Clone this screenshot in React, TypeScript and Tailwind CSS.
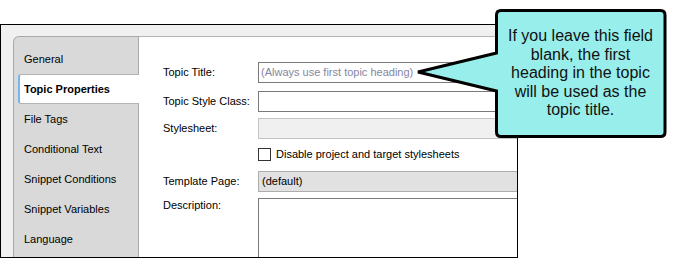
import React from "react";

const tabs = [
  "General",
  "Topic Properties",
  "File Tags",
  "Conditional Text",
  "Snippet Conditions",
  "Snippet Variables",
  "Language",
];

export default function App() {
  return (
    <div className="relative w-[676px] h-[258px] overflow-hidden bg-white font-['Liberation_Sans',Arial,sans-serif] text-black">
      <div className="pt-[24px]">
        <div className="flex w-[518px] h-[234px] overflow-hidden border border-black bg-[#f0f0f0] pt-[11px] pl-[12px]">
          {/* tab strip */}
          <div className="w-[126px] h-[260px] shrink-0 rounded-tl-[6px] border-l border-t border-r border-[#a9a9a9] bg-[#d9d9d9] pt-[7px] text-[11px]">
            {tabs.map((t) =>
              t === "Topic Properties" ? (
                <div
                  key={t}
                  className="relative z-10 ml-[4px] -mr-[1px] flex h-[30px] items-center rounded-l-[3px] border-y border-l-2 border-y-[#b4b4b4] border-l-[#79b5ea] bg-white pl-[4px] font-bold"
                >
                  {t}
                </div>
              ) : (
                <div key={t} className="flex h-[30px] items-center pl-[10px]">
                  {t}
                </div>
              )
            )}
          </div>
          {/* content */}
          <div className="min-w-0 flex-1 h-[260px] overflow-hidden border-t border-[#b4b4b4] bg-white pl-[24px] text-[11px]">
            <div className="mt-[25px] flex h-[21px] items-center">
              <div className="w-[95px] shrink-0">Topic Title:</div>
              <div className="flex h-[21px] w-[300px] shrink-0 items-center border border-[#7a7a7a] bg-white px-[2px] text-[#8585a0]">
                (Always use first topic heading)
              </div>
            </div>
            <div className="mt-[8px] flex h-[21px] items-center">
              <div className="w-[95px] shrink-0">Topic Style Class:</div>
              <div className="h-[21px] w-[300px] shrink-0 border border-[#7a7a7a] bg-white" />
            </div>
            <div className="mt-[6px] flex h-[21px] items-center">
              <div className="w-[95px] shrink-0">Stylesheet:</div>
              <div className="h-[21px] w-[300px] shrink-0 border border-[#c4c4c4] bg-[#f0f0f0]" />
            </div>
            <div className="mt-[9px] flex h-[13px] items-center">
              <div className="w-[95px] shrink-0" />
              <div className="h-[13px] w-[13px] shrink-0 border border-[#333333] bg-white" />
              <div className="ml-[5px] whitespace-nowrap">Disable project and target stylesheets</div>
            </div>
            <div className="mt-[10px] flex h-[21px] items-center">
              <div className="w-[95px] shrink-0">Template Page:</div>
              <div className="flex h-[21px] w-[300px] shrink-0 items-center border border-[#adadad] bg-[#e1e1e1] px-[3px]">
                (default)
              </div>
            </div>
            <div className="mt-[6px] flex items-start">
              <div className="w-[95px] shrink-0 -mt-[1px]">Description:</div>
              <div className="h-[90px] w-[300px] shrink-0 border border-[#7a7a7a] bg-white" />
            </div>
          </div>
        </div>
      </div>

      {/* callout */}
      <svg
        className="pointer-events-none absolute left-0 top-0"
        width="676"
        height="258"
        viewBox="0 0 676 258"
      >
        <path
          d="M501 10.5 H660.5 Q665 10.5 665 15 V132 Q665 136.5 660.5 136.5 H501 Q496.5 136.5 496.5 132 V91 L418 72 L496.5 53 V15 Q496.5 10.5 501 10.5 Z"
          fill="#98eeea"
          stroke="#000000"
          strokeWidth="3"
          strokeLinejoin="miter"
        />
      </svg>
      <div className="absolute left-[497px] top-[27px] w-[167px] text-center text-[16px] leading-[18.6px] text-[#111111]">
        If you leave this field
        <br />
        blank, the first
        <br />
        heading in the topic
        <br />
        will be used as the
        <br />
        topic title.
      </div>
    </div>
  );
}
